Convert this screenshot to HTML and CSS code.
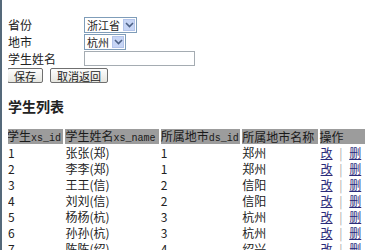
FILE: index.html
```html
<!DOCTYPE html>
<html lang="zh-CN">
<head>
    <meta charset="UTF-8">
    <title>学生管理</title>
    <link rel="stylesheet" href="styles.css">
</head>
<body>
    <form class="edit-form">
        <label>省份</label>
        <span class="select"><span class="select-text">浙江省</span><span class="select-btn"><svg width="9" height="6" viewBox="0 0 9 6"><path d="M1 1 L4.5 4.5 L8 1" fill="none" stroke="#4d6185" stroke-width="1.6"/></svg></span></span>
        <label>地市</label>
        <span class="select"><span class="select-text">杭州</span><span class="select-btn"><svg width="9" height="6" viewBox="0 0 9 6"><path d="M1 1 L4.5 4.5 L8 1" fill="none" stroke="#4d6185" stroke-width="1.6"/></svg></span></span>
        <label>学生姓名</label>
        <input type="text" class="name-input">
        <div class="buttons">
            <button type="button">保存</button>
            <button type="button">取消返回</button>
        </div>
    </form>

    <h2>学生列表</h2>

    <table class="list">
        <colgroup>
            <col style="width: 57px">
            <col style="width: 94px">
            <col style="width: 80px">
            <col style="width: 76px">
            <col style="width: 46px">
        </colgroup>
        <thead>
            <tr>
                <th>学生<span class="en">xs_id</span></th>
                <th>学生姓名<span class="en">xs_name</span></th>
                <th>所属地市<span class="en">ds_id</span></th>
                <th>所属地市名称</th>
                <th>操作</th>
            </tr>
        </thead>
        <tbody>
            <tr><td>1</td><td>张张(郑)</td><td>1</td><td>郑州</td><td><a href="#">改</a> <span class="sep">|</span> <a href="#">删</a></td></tr>
            <tr><td>2</td><td>李李(郑)</td><td>1</td><td>郑州</td><td><a href="#">改</a> <span class="sep">|</span> <a href="#">删</a></td></tr>
            <tr><td>3</td><td>王王(信)</td><td>2</td><td>信阳</td><td><a href="#">改</a> <span class="sep">|</span> <a href="#">删</a></td></tr>
            <tr><td>4</td><td>刘刘(信)</td><td>2</td><td>信阳</td><td><a href="#">改</a> <span class="sep">|</span> <a href="#">删</a></td></tr>
            <tr><td>5</td><td>杨杨(杭)</td><td>3</td><td>杭州</td><td><a href="#">改</a> <span class="sep">|</span> <a href="#">删</a></td></tr>
            <tr><td>6</td><td>孙孙(杭)</td><td>3</td><td>杭州</td><td><a href="#">改</a> <span class="sep">|</span> <a href="#">删</a></td></tr>
            <tr><td>7</td><td>陈陈(绍)</td><td>4</td><td>绍兴</td><td><a href="#">改</a> <span class="sep">|</span> <a href="#">删</a></td></tr>
        </tbody>
    </table>
</body>
</html>
```

FILE: styles.css
```css
html {
    border-left: 2px solid #55697a;
    background-color: #fff;
}
body {
    font-family: "Noto Sans CJK SC", "Liberation Sans", sans-serif;
    font-size: 12px;
    color: #222;
    margin: 8px 8px 8px 6px;
}
.edit-form {
    display: grid;
    grid-template-columns: 76px auto;
    grid-auto-rows: 17px;
    align-items: center;
    justify-items: start;
    margin-top: 8px;
}
.edit-form label {
    font-size: 12px;
    line-height: 16px;
}
.select {
    display: inline-flex;
    align-items: center;
    height: 14px;
    border: 1px solid #7f9db9;
    background-color: #fff;
    padding-left: 2px;
}
.select-text {
    font-size: 11px;
    line-height: 14px;
    margin-right: 3px;
}
.select-btn {
    display: flex;
    align-items: center;
    justify-content: center;
    width: 12px;
    height: 12px;
    margin-right: 1px;
    background-color: #c7d5f5;
    border: 1px solid #b3c4ea;
    box-sizing: border-box;
}
.name-input {
    width: 111px;
    height: 15px;
    box-sizing: border-box;
    border: 1px solid #a5acb2;
    padding: 0;
    margin: 0;
}
.buttons {
    grid-column: 1 / 3;
    display: flex;
    gap: 7px;
    margin-left: -1px;
}
button {
    font-family: "Noto Sans CJK SC", sans-serif;
    font-size: 11px;
    line-height: 12px;
    height: 15px;
    padding: 0 6px;
    color: #222;
    background: linear-gradient(#fdfdfd, #e6e6e0);
    border: 1px solid #6f6f6f;
    border-radius: 2px;
}
h2 {
    font-size: 14px;
    line-height: 16px;
    font-weight: bold;
    margin: 14px 0 13px;
}
.list {
    table-layout: fixed;
    border-spacing: 2px;
    margin-left: -3px;
}
.list th,
.list td {
    padding: 0;
    height: 14px;
    line-height: 14px;
    text-align: left;
    white-space: nowrap;
}
.list th {
    background-color: #9c9c9c;
    font-weight: normal;
    font-size: 12px;
    color: #1a1a1a;
}
.en {
    font-family: "Liberation Mono", monospace;
    font-size: 10px;
    line-height: 10px;
}
.list td {
    font-size: 12px;
}
.list td:first-child {
    padding-left: 1px;
}
.list a {
    color: #2b2b7a;
    text-decoration: underline;
    margin: 0 1px;
}
.sep {
    color: #aaa;
    margin: 0 3px;
}
```
